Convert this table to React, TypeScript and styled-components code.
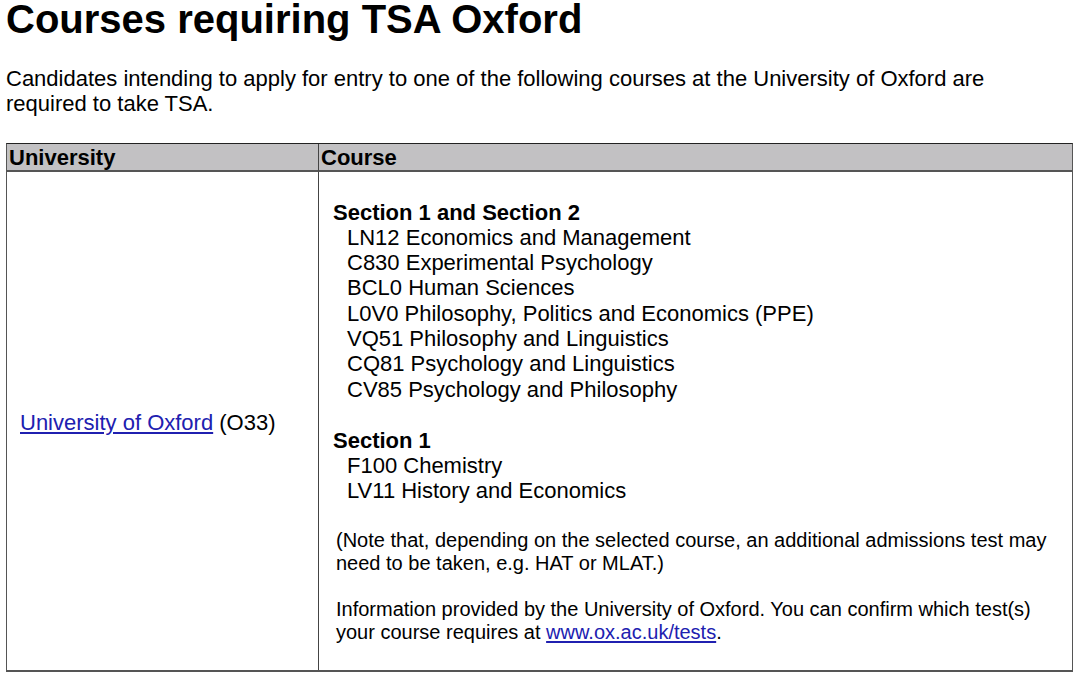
import React from 'react'
import styled, { createGlobalStyle } from 'styled-components'

type Section = {
  title: string
  courses: string[]
}

const sections: Section[] = [
  {
    title: 'Section 1 and Section 2',
    courses: [
      'LN12 Economics and Management',
      'C830 Experimental Psychology',
      'BCL0 Human Sciences',
      'L0V0 Philosophy, Politics and Economics (PPE)',
      'VQ51 Philosophy and Linguistics',
      'CQ81 Psychology and Linguistics',
      'CV85 Psychology and Philosophy',
    ],
  },
  {
    title: 'Section 1',
    courses: ['F100 Chemistry', 'LV11 History and Economics'],
  },
]

const GlobalStyle = createGlobalStyle`
  html, body {
    margin: 0;
    padding: 0;
    background: #fff;
  }
  body {
    font-family: "Liberation Sans", Arial, sans-serif;
    color: #000;
  }
`

const App = () => {
  return (
    <Page>
      <GlobalStyle />
      <Title>Courses requiring TSA Oxford</Title>
      <Intro>
        Candidates intending to apply for entry to one of the following courses at the University of Oxford are
        required to take TSA.
      </Intro>
      <Table>
        <HeadCell>University</HeadCell>
        <HeadCell divider>Course</HeadCell>
        <UniversityCell>
          <span>
            <BlueLink href="#">University of Oxford</BlueLink> (O33)
          </span>
        </UniversityCell>
        <CourseCell>
          {sections.map((s) => (
            <SectionBlock key={s.title}>
              <SectionTitle>{s.title}</SectionTitle>
              {s.courses.map((c) => (
                <CourseItem key={c}>{c}</CourseItem>
              ))}
            </SectionBlock>
          ))}
          <Note>
            (Note that, depending on the selected course, an additional admissions test may need to be taken, e.g. HAT
            or MLAT.)
          </Note>
          <Note>
            Information provided by the University of Oxford. You can confirm which test(s) your course requires at{' '}
            <BlueLink href="#">www.ox.ac.uk/tests</BlueLink>.
          </Note>
        </CourseCell>
      </Table>
    </Page>
  )
}

export default App

const Page = styled.div`
  padding: 0 0 0 6px;
  width: 1080px;
  box-sizing: border-box;
`

const Title = styled.h1`
  margin: -1px 0 27px 0;
  font-size: 40px;
  line-height: 40px;
  font-weight: 700;
`

const Intro = styled.p`
  margin: 0 0 26px 0;
  width: 1000px;
  font-size: 22px;
  line-height: 1.15;
`

const Table = styled.div`
  display: grid;
  grid-template-columns: 311px 1fr;
  grid-template-rows: 28px 498px;
  width: 1067px;
  box-sizing: border-box;
  border: 1px solid #555;
  border-top-color: #222;
  border-bottom-width: 2px;
`

const HeadCell = styled.div<{ divider?: boolean }>`
  background: #c2c1c3;
  border-bottom: 2px solid #555;
  border-left: ${(p) => (p.divider ? '1px solid #444' : 'none')};
  padding: 1px 2px 0;
  font-size: 22px;
  line-height: 25.3px;
  font-weight: 700;
`

const UniversityCell = styled.div`
  display: flex;
  align-items: center;
  padding: 4px 0 0 13px;
  font-size: 22px;
  line-height: 1.15;
`

const CourseCell = styled.div`
  border-left: 1px solid #444;
  padding: 28px 0 0 0;
  display: flex;
  flex-direction: column;
`

const SectionBlock = styled.div`
  display: flex;
  flex-direction: column;
  margin-bottom: 25.8px;
  font-size: 22px;
  line-height: 25.3px;
`

const SectionTitle = styled.div`
  font-weight: 700;
  padding-left: 14px;
`

const CourseItem = styled.div`
  padding-left: 28px;
`

const Note = styled.p`
  margin: 0 0 23px 0;
  padding: 0 10px 0 17px;
  font-size: 20px;
  line-height: 23px;
`

const BlueLink = styled.a`
  color: #2020b0;
  text-decoration: underline;
  text-underline-offset: 2px;
`
